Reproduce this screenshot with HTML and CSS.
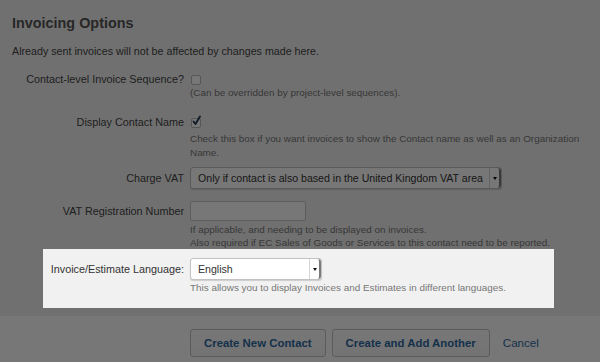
FILE: index.html
```html
<!DOCTYPE html>
<html lang="en">
   <head>
      <meta charset="UTF-8" />
      <title>Invoicing Options</title>
      <link rel="stylesheet" href="styles.css">
   </head>
   <body>
      <div class="dialog">
         <div class="dialog-body">
            <h2 class="title">Invoicing Options</h2>
            <p class="intro">Already sent invoices will not be affected by changes made here.</p>
            <div class="form">
               <div class="row row-check">
                  <label class="label">Contact-level Invoice Sequence?</label>
                  <div class="field">
                     <span class="checkbox"></span>
                     <p class="hint">(Can be overridden by project-level sequences).</p>
                  </div>
               </div>
               <div class="row row-check">
                  <label class="label">Display Contact Name</label>
                  <div class="field">
                     <span class="checkbox checked">
                        <svg width="11" height="12" viewBox="0 0 11 12"><path d="M2.5 6.5 L4.5 9 L9 1.5" fill="none" stroke="#1d3350" stroke-width="1.8" stroke-linecap="round" stroke-linejoin="round"/></svg>
                     </span>
                     <p class="hint">Check this box if you want invoices to show the Contact name as well as an Organization<br>Name.</p>
                  </div>
               </div>
               <div class="row row-select">
                  <label class="label">Charge VAT</label>
                  <div class="field">
                     <div class="select select-wide">
                        <span class="select-value">Only if contact is also based in the United Kingdom VAT area</span>
                        <span class="select-arrow"></span>
                     </div>
                  </div>
               </div>
               <div class="row row-input">
                  <label class="label">VAT Registration Number</label>
                  <div class="field">
                     <div class="text-input"></div>
                     <p class="hint">If applicable, and needing to be displayed on invoices.<br>Also required if EC Sales of Goods or Services to this contact need to be reported.</p>
                  </div>
               </div>
               <div class="row highlight">
                  <label class="label">Invoice/Estimate Language:</label>
                  <div class="field">
                     <div class="select select-lang">
                        <span class="select-value">English</span>
                        <span class="select-arrow"></span>
                     </div>
                     <p class="hint">This allows you to display Invoices and Estimates in different languages.</p>
                  </div>
               </div>
            </div>
         </div>
         <div class="dialog-footer">
            <button class="btn">Create New Contact</button>
            <button class="btn">Create and Add Another</button>
            <a class="cancel" href="#">Cancel</a>
         </div>
      </div>
   </body>
</html>
```

FILE: styles.css
```css
html, body {
margin: 0;
padding: 0;
overflow: hidden;
}
body {
font-family: 'Liberation Sans', Arial, Helvetica, sans-serif;
background: #fff;
color: #444;
}
.dialog {
width: 600px;
height: 362px;
display: flex;
flex-direction: column;
}
.dialog-body {
background: #f1f1f1;
padding: 0 12px;
height: 316px;
box-sizing: border-box;
}
.title {
font-size: 14.4px;
line-height: 18px;
font-weight: 700;
color: #555;
margin: 0;
padding-top: 14px;
}
.intro {
font-size: 10.7px;
line-height: 14px;
color: #444;
margin: 12px 0 0 0;
}
.form {
display: flex;
flex-direction: column;
margin-top: 14px;
}
.row {
display: grid;
grid-template-columns: 172px 1fr;
column-gap: 6px;
}
.label {
text-align: right;
font-size: 10.8px;
line-height: 14px;
color: #444;
white-space: nowrap;
}
.field {
display: flex;
flex-direction: column;
align-items: flex-start;
}
.hint {
margin: 0;
font-size: 9.9px;
line-height: 14px;
color: #777;
white-space: nowrap;
}
.row-check + .row-check {
margin-top: 15px;
}
.row-check .hint {
margin-top: 1px;
}
.row-check + .row-check .hint {
margin-top: 4px;
}
.checkbox {
width: 8px;
height: 8px;
margin: 3px 0 0 1px;
border: 1px solid #b9b9b9;
border-radius: 2px;
background: #fff;
position: relative;
}
.checkbox svg {
position: absolute;
left: -1px;
top: -4px;
}
.row-select {
margin-top: 7px;
}
.row-select .label,
.highlight .label {
line-height: 22px;
}
.select {
display: flex;
align-items: stretch;
height: 20px;
border: 1px solid #c2c2c2;
border-radius: 3px;
background: #fff;
box-shadow: 0 1px 1px rgba(0,0,0,0.15);
font-size: 10.6px;
color: #333;
}
.select-value {
flex: 1;
line-height: 20px;
padding-left: 7px;
white-space: nowrap;
}
.select-arrow {
width: 9px;
border-left: 1px solid #d6d6d6;
border-right: 2px solid #7a7a7a;
border-radius: 0 3px 3px 0;
display: flex;
align-items: center;
justify-content: center;
}
.select-arrow::after {
content: '';
border-left: 2.5px solid transparent;
border-right: 2.5px solid transparent;
border-top: 3px solid #111;
margin-top: 1px;
}
.select-wide {
width: 310px;
}
.row-input {
margin-top: 12px;
}
.row-input .label {
line-height: 20px;
}
.row-input .hint {
line-height: 13px;
}
.text-input {
width: 114px;
height: 18px;
border: 1px solid #c8c8c8;
border-radius: 2px;
background: #fff;
margin-bottom: 2px;
}
.highlight {
margin: 0 34px 0 31px;
padding: 9px 0 13px 0;
grid-template-columns: 141px 1fr;
background: #f1f1f1;
position: relative;
z-index: 1;
box-shadow: 0 0 0 2000px rgba(0, 0, 0, 0.535);
}
.highlight .label {
color: #333;
}
.select-lang {
width: 130px;
margin-bottom: 1px;
}
.dialog-footer {
flex: 1;
background: #fff;
display: flex;
align-items: flex-start;
gap: 6px;
padding: 13px 0 0 190px;
}
.btn {
font-family: inherit;
font-size: 11.4px;
font-weight: 700;
color: #2f6aa0;
height: 28px;
padding: 0 13px;
background: linear-gradient(#fff, #f6f6f6);
border: 1px solid #c4c4c4;
border-radius: 3px;
}
.cancel {
font-size: 11.6px;
color: #2f6aa0;
text-decoration: none;
line-height: 28px;
margin-left: 7px;
}
```
